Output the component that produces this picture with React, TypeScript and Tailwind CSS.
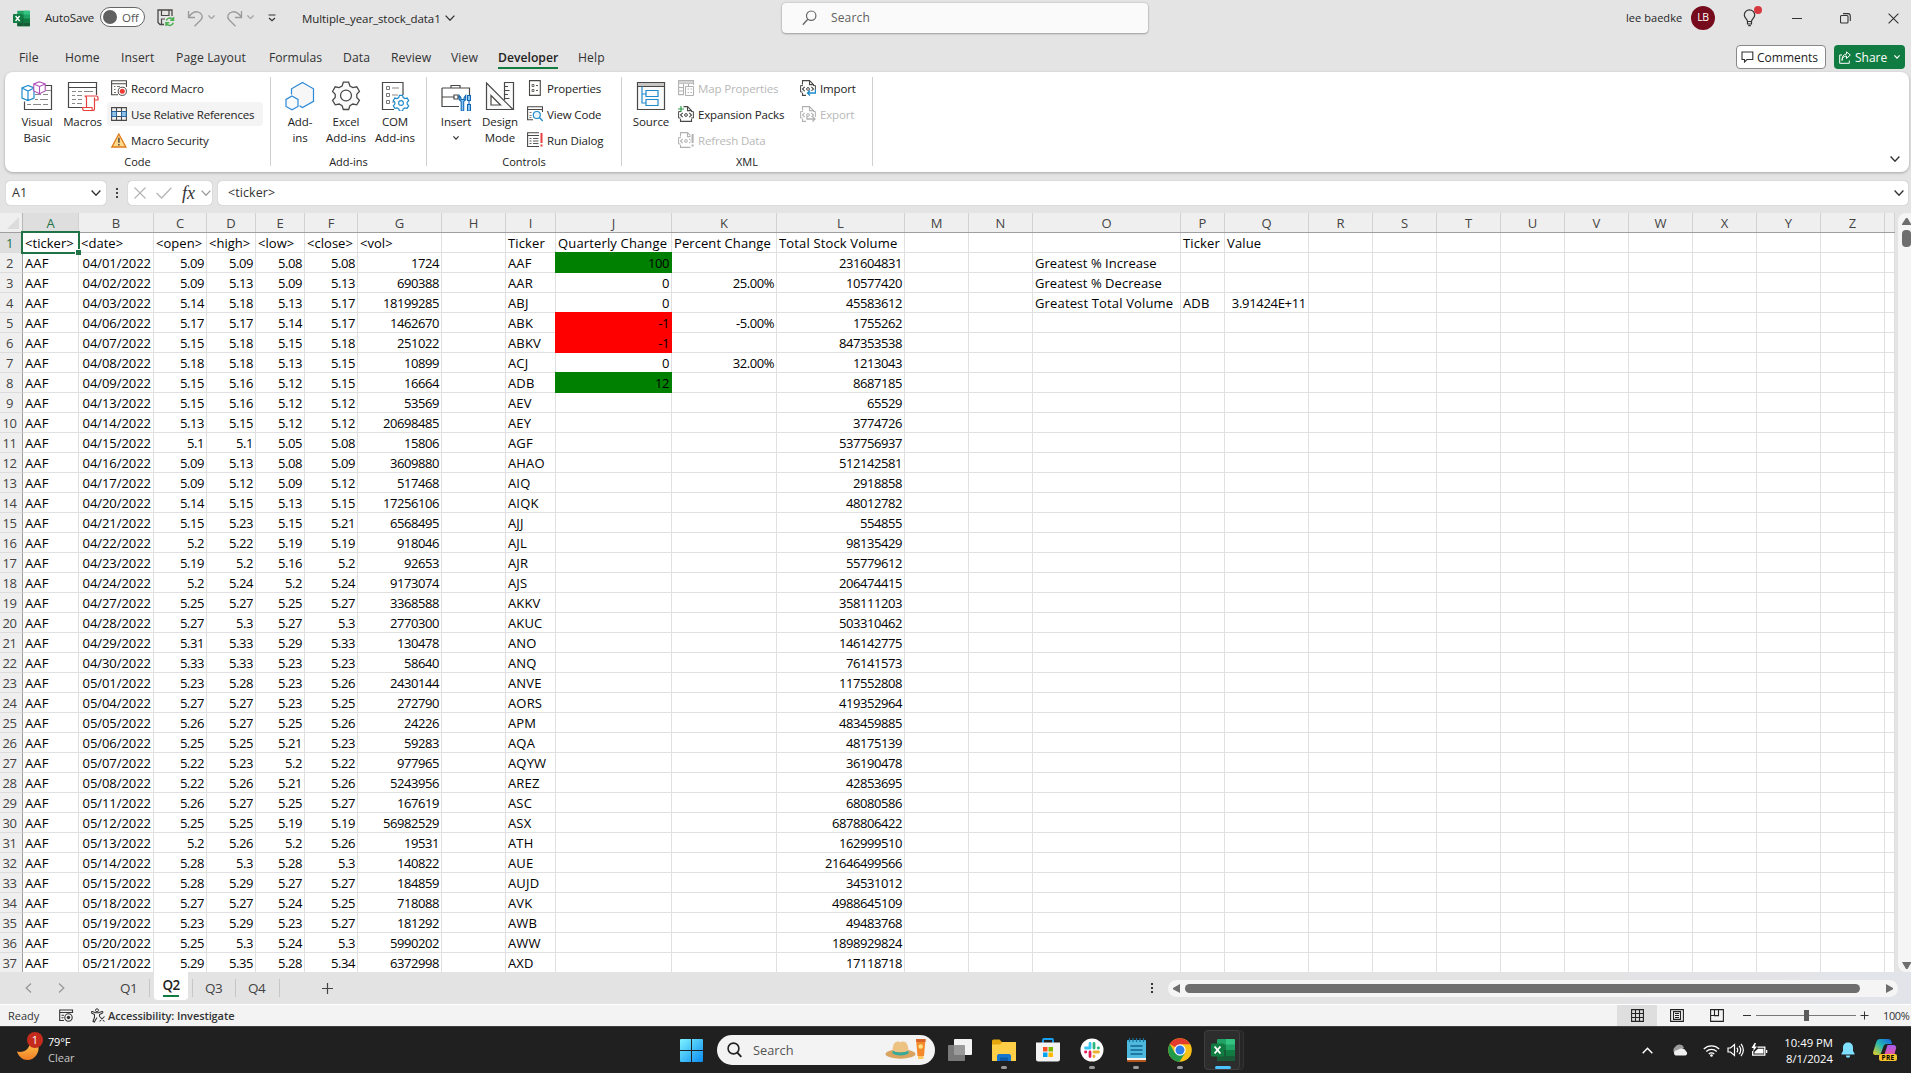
import type { ReactNode } from "react";

const UI = "font-['Open_Sans','Noto_Sans',sans-serif]";

/* ---------- sheet data ---------- */

const COLS: [string, string][] = [
  ["A", "w-[56px]"], ["B", "w-[75px]"], ["C", "w-[53px]"], ["D", "w-[49px]"], ["E", "w-[49px]"],
  ["F", "w-[53px]"], ["G", "w-[84px]"], ["H", "w-[64px]"], ["I", "w-[50px]"], ["J", "w-[116px]"],
  ["K", "w-[105px]"], ["L", "w-[128px]"], ["M", "w-[64px]"], ["N", "w-[64px]"], ["O", "w-[148px]"],
  ["P", "w-[44px]"], ["Q", "w-[84px]"], ["R", "w-[64px]"], ["S", "w-[64px]"], ["T", "w-[64px]"],
  ["U", "w-[64px]"], ["V", "w-[64px]"], ["W", "w-[64px]"], ["X", "w-[64px]"], ["Y", "w-[64px]"],
  ["Z", "w-[64px]"], ["", "w-[10px]"],
];

// date | open | high | low | close | vol | ticker | total volume
const DATA = `04/01/2022|5.09|5.09|5.08|5.08|1724|AAF|231604831
04/02/2022|5.09|5.13|5.09|5.13|690388|AAR|10577420
04/03/2022|5.14|5.18|5.13|5.17|18199285|ABJ|45583612
04/06/2022|5.17|5.17|5.14|5.17|1462670|ABK|1755262
04/07/2022|5.15|5.18|5.15|5.18|251022|ABKV|847353538
04/08/2022|5.18|5.18|5.13|5.15|10899|ACJ|1213043
04/09/2022|5.15|5.16|5.12|5.15|16664|ADB|8687185
04/13/2022|5.15|5.16|5.12|5.12|53569|AEV|65529
04/14/2022|5.13|5.15|5.12|5.12|20698485|AEY|3774726
04/15/2022|5.1|5.1|5.05|5.08|15806|AGF|537756937
04/16/2022|5.09|5.13|5.08|5.09|3609880|AHAO|512142581
04/17/2022|5.09|5.12|5.09|5.12|517468|AIQ|2918858
04/20/2022|5.14|5.15|5.13|5.15|17256106|AIQK|48012782
04/21/2022|5.15|5.23|5.15|5.21|6568495|AJJ|554855
04/22/2022|5.2|5.22|5.19|5.19|918046|AJL|98135429
04/23/2022|5.19|5.2|5.16|5.2|92653|AJR|55779612
04/24/2022|5.2|5.24|5.2|5.24|9173074|AJS|206474415
04/27/2022|5.25|5.27|5.25|5.27|3368588|AKKV|358111203
04/28/2022|5.27|5.3|5.27|5.3|2770300|AKUC|503310462
04/29/2022|5.31|5.33|5.29|5.33|130478|ANO|146142775
04/30/2022|5.33|5.33|5.23|5.23|58640|ANQ|76141573
05/01/2022|5.23|5.28|5.23|5.26|2430144|ANVE|117552808
05/04/2022|5.27|5.27|5.23|5.25|272790|AORS|419352964
05/05/2022|5.26|5.27|5.25|5.26|24226|APM|483459885
05/06/2022|5.25|5.25|5.21|5.23|59283|AQA|48175139
05/07/2022|5.22|5.23|5.2|5.22|977965|AQYW|36190478
05/08/2022|5.22|5.26|5.21|5.26|5243956|AREZ|42853695
05/11/2022|5.26|5.27|5.25|5.27|167619|ASC|68080586
05/12/2022|5.25|5.25|5.19|5.19|56982529|ASX|6878806422
05/13/2022|5.2|5.26|5.2|5.26|19531|ATH|162999510
05/14/2022|5.28|5.3|5.28|5.3|140822|AUE|21646499566
05/15/2022|5.28|5.29|5.27|5.27|184859|AUJD|34531012
05/18/2022|5.27|5.27|5.24|5.25|718088|AVK|4988645109
05/19/2022|5.23|5.29|5.23|5.27|181292|AWB|49483768
05/20/2022|5.25|5.3|5.24|5.3|5990202|AWW|1898929824
05/21/2022|5.29|5.35|5.28|5.34|6372998|AXD|17118718`.split("\n").map((l) => l.split("|"));

const HEAD: Record<string, string> = {
  A: "<ticker>", B: "<date>", C: "<open>", D: "<high>", E: "<low>", F: "<close>", G: "<vol>",
  I: "Ticker", J: "Quarterly Change", K: "Percent Change", L: "Total Stock Volume", P: "Ticker", Q: "Value",
};
const EXTRA: Record<string, string> = {
  J2: "100", J3: "0", J4: "0", J5: "-1", J6: "-1", J7: "0", J8: "12",
  K3: "25.00%", K5: "-5.00%", K7: "32.00%",
  O2: "Greatest % Increase", O3: "Greatest % Decrease", O4: "Greatest Total Volume", P4: "ADB", Q4: "3.91424E+11",
};
const GREEN = "bg-[#008000] border-[#008000] shadow-[-1px_-1px_0_#008000,0_-1px_0_#008000,-1px_0_0_#008000]";
const RED = "bg-[#ff0000] border-[#ff0000] shadow-[-1px_-1px_0_#ff0000,0_-1px_0_#ff0000,-1px_0_0_#ff0000]";
const FILL: Record<string, string> = { J2: GREEN, J8: GREEN, J5: RED, J6: RED };

function valueAt(col: string, row: number): string {
  if (row === 1) return HEAD[col] ?? "";
  const d = DATA[row - 2];
  switch (col) {
    case "A": return "AAF";
    case "B": return d[0];
    case "C": return d[1];
    case "D": return d[2];
    case "E": return d[3];
    case "F": return d[4];
    case "G": return d[5];
    case "I": return d[6];
    case "L": return d[7];
    default: return EXTRA[col + row] ?? "";
  }
}

function tracking(col: string, v: string): string {
  if (v.includes("/")) return "tracking-[-0.05px]";
  if (/^-?\d/.test(v)) return col === "Q" ? "tracking-[-0.3px]" : "tracking-[-0.43px]";
  if (v.includes("%")) return "tracking-[0.05px]";
  if (v === "Percent Change") return "tracking-[0.08px]";
  if (v.startsWith("<")) return "tracking-[0.03px]";
  return "tracking-[0.15px]";
}

function Cell({ col, w, row }: { col: string; w: string; row: number }) {
  const v = valueAt(col, row);
  const align = /^-?\d/.test(v) ? "justify-end pr-[2px]" : "justify-start pl-[2px]";
  const fill = FILL[col + row] ?? "border-[#e0e0e0]";
  return (
    <div className={`${w} flex h-[20px] shrink-0 items-center overflow-visible whitespace-nowrap border-r border-b pt-[2px] text-[13px] leading-[17px] ${align} ${tracking(col, v)} ${fill}`}>
      {v}
    </div>
  );
}

/* ---------- small glyphs ---------- */

function Chevron({ w = 10, c = "#333", sw = 1.3 }: { w?: number; c?: string; sw?: number }) {
  return (
    <svg width={w} height={w * 0.6} viewBox="0 0 10 6" fill="none" stroke={c} strokeWidth={(sw * 10) / w} className="block shrink-0">
      <path d="M.6.6 5 5.2 9.4.6" />
    </svg>
  );
}

function ExcelLogo({ s }: { s: number }) {
  return (
    <svg width={s} height={s} viewBox="0 0 24 24" className="block shrink-0">
      <rect x="6" y="1" width="18" height="22" rx="1.2" fill="#21a366" />
      <path d="M6 6.5h9V12H6z" fill="#107c41" />
      <path d="M15 1h7.800a1.200 1.200 0 0 1 1.200 1.200V6.500h-9z" fill="#33c481" />
      <path d="M15 12h9v5.500h-9z" fill="#107c41" />
      <path d="M6 12h9v11H7.200A1.200 1.200 0 0 1 6 21.800z" fill="#185c37" />
      <path d="M15 17.500h9v4.300a1.200 1.200 0 0 1-1.200 1.200H15z" fill="#185c37" />
      <rect x="0" y="5.500" width="13" height="13" rx="1.200" fill="#107c41" />
      <path d="m3.600 8.500 5.800 7M9.400 8.500l-5.800 7" stroke="#fff" strokeWidth="1.900" />
    </svg>
  );
}

function S({ w, h, children, className = "" }: { w: number; h: number; children: ReactNode; className?: string }) {
  return (
    <svg width={w} height={h} viewBox={`0 0 ${w} ${h}`} fill="none" className={`block shrink-0 ${className}`}>
      {children}
    </svg>
  );
}

const K = "#4a4846";
const B = "#1e8bcd";
const G = "#b1b1b1";
// eight-edge hex gear outline centred on the origin
const GEAR = "M-1.900-9.500h3.800l.9 2.700 2.100 1.200 2.800-.600 1.900 3.200-1.900 2.100v2.300l1.900 2.100-1.900 3.200-2.800-.600-2.100 1.200-.900 2.700h-3.800l-.9-2.700-2.100-1.200-2.800.600-1.900-3.200 1.900-2.100v-2.300l-1.900-2.100 1.900-3.200 2.800.600 2.100-1.200z";

const IcVisualBasic = () => (
  <S w={32} h={30}>
    <path d="M24 4.500h6.500v24H3.500v-8" stroke={K} strokeWidth="1.200" />
    <path d="M25 9.500h5M14 13.500h6M22 13.500h5M14 18.500h3M19 18.500h8M6 23.500h4M12 23.500h8M22 23.500h5" stroke="#8a8886" />
    <path d="M7 4.500 1 7v10l6 2.500 6-2.500V7zM1 7l6 3 6-3M7 10v9.500" fill="#fff" stroke={B} strokeWidth="1.200" />
    <path d="M18.500.8 12.800 3v7l5.700 2.700 5.700-2.700V3zM12.800 3l5.700 2.500L24.200 3M18.500 5.500v7" fill="#fff" stroke="#ae4bb8" strokeWidth="1.100" />
  </S>
);
const IcMacros = () => (
  <S w={32} h={30}>
    <path d="M29.500 14V1.500H1.500v25H16M1.500 6.500h28" stroke={K} strokeWidth="1.200" />
    <path d="M5 10.500h4M11 10.500h4M17 10.500h9M5 14.500h3M10 14.500h5M5 18.500h4M11 18.500h4M5 22.500h3M10 22.500h5" stroke="#8a8886" />
    <path d="M19.500 26.500V17.500c0-1.500-1-2.500-2-2.500h12c1 0 1.500 1 1.500 2.500V19h-3.500v8.500c0 1-.5 2-1.500 2H17c-1 0-1.500-1-1.500-3h9.500c0 2 .5 3 1 3M27.500 19v-2.500" stroke="#e8403c" strokeWidth="1.200" fill="#fff" />
  </S>
);
const IcRecord = () => (
  <S w={16} h={16}>
    <path d="M15.500 7V.7H.6v14H7M.6 3.700h15" stroke={K} strokeWidth="1.100" />
    <path d="M3 6.500h1.500M6 6.500h3M3 9.500h1.500M3 12.500h2" stroke="#797775" />
    <circle cx="11.300" cy="11.300" r="4.100" fill="#fff" stroke={K} /><circle cx="11.300" cy="11.300" r="2.500" fill="#f03a33" />
  </S>
);
const IcRelative = () => (
  <S w={16} h={14}>
    <path d="M.6 4.500h14.800v5H.6z" fill="#8fc3ea" />
    <path d="M5.500 4.500h5v5h-5z" fill="#fff" />
    <path d="M.6.6h14.800v12.800H.6zM.6 4.500h14.800M.6 9.500h14.800M5.500.6v12.800M10.500.6v12.800" stroke={K} strokeWidth="1.100" />
    <path d="M.6 4.500h4.900v5H.6zM10.500 4.500h4.900v5h-4.900z" stroke="#1e6fb8" strokeWidth=".8" />
  </S>
);
const IcWarn = () => (
  <S w={16} h={15}>
    <path d="M7.800 1 .9 14h14z" fill="#fbd88a" stroke="#e07b1a" strokeWidth="1.300" />
    <path d="M7.900 4.800v5M7.900 11v1.500" stroke={K} strokeWidth="1.500" />
  </S>
);
const IcAddins = () => (
  <S w={30} h={30}>
    <path d="m17.500 1.500 11 6.300v12.500l-11 6.300-11-6.300V7.800z" fill="#f7f7f7" stroke="#2b88d8" strokeWidth="1.200" />
    <path d="m7 15 6 3.400v7L7 28.800l-6-3.400v-7z" fill="#fff" stroke="#fff" strokeWidth="3" />
    <path d="m7 15 6 3.400v7L7 28.800l-6-3.400v-7z" fill="#fafafa" stroke="#2b88d8" strokeWidth="1.200" />
  </S>
);
const IcGear = () => (
  <S w={30} h={30}>
    <g transform="translate(15 14.500) scale(1.400)"><path d={GEAR} fill="#fafafa" stroke={K} strokeWidth=".9" /><circle r="3.900" fill="#fff" stroke={K} strokeWidth=".9" /></g>
  </S>
);
const IcCom = () => (
  <S w={30} h={30}>
    <path d="M23 14V1.500H2.500v27H14" stroke={K} strokeWidth="1.200" />
    <path d="M6.500 5.500h3v3h-3zM6.500 12.500h3v3h-3zM6.500 19.500h3v3h-3z" stroke="#797775" />
    <path d="M12 7h7M12 14h6M12 21h2" stroke="#8a8886" />
    <g transform="translate(21 22) scale(.8)"><path d={GEAR} fill="#fff" stroke={B} strokeWidth="1.500" /><circle r="3" stroke={B} strokeWidth="1.400" /></g>
  </S>
);
const IcInsert = () => (
  <S w={30} h={30}>
    <path d="M10 7V4.500h9V7M1 7h27.500v7M1 7v18.500h17M1 16h12M17 16h3" stroke={K} strokeWidth="1.200" />
    <path d="M13 14h4v4h-4z" stroke={K} strokeWidth="1.200" />
    <path d="M18.200 14.500v4l2 2v9.500h2.500v-9.500l2-2v-4l-1.700 2.500v1.500h-3V17z" fill="#8cc6f2" stroke="#1068b5" strokeWidth="1.100" />
    <path d="M26.500 14.500h3v5h-3zM28 19.500v4M26.500 23.500h3V30h-3z" fill="#8cc6f2" stroke="#1068b5" strokeWidth="1.100" />
  </S>
);
const IcDesign = () => (
  <S w={30} h={30}>
    <path d="M19.500 19V1.500h9v27" stroke={K} strokeWidth="1.200" fill="#fafafa" />
    <path d="M19.500 5.500H23M19.500 9.500h5M19.500 13.500H23M19.500 17.500h5" stroke={K} />
    <path d="M1.500 2v26.500H28z" fill="#fafafa" stroke={K} strokeWidth="1.200" />
    <path d="M6 14.500v9.500h9.500z" stroke={K} strokeWidth="1.200" fill="#fff" />
  </S>
);
const IcProps = () => (
  <S w={16} h={16}>
    <path d="M2.500.600h10.800v14.800H2.500z" stroke={K} strokeWidth="1.100" />
    <path d="M5 4.500h2v2H5zM5 9.500h2v2H5z" stroke="#605e5c" strokeWidth=".9" /><path d="M9 5.500h2M9 10.500h2" stroke="#605e5c" />
  </S>
);
const IcView = () => (
  <S w={16} h={16}>
    <path d="M15.500 6V.7H.6v13H6M.6 3.500h15" stroke={K} strokeWidth="1.100" />
    <path d="M2.500 6.500h2M2.500 9.500h2M2.500 11.500h2" stroke="#797775" />
    <circle cx="9.800" cy="9" r="3.500" stroke={B} strokeWidth="1.200" fill="#e9f4fc" /><path d="m12.300 11.500 3.500 3.500" stroke={B} strokeWidth="1.400" />
  </S>
);
const IcRun = () => (
  <S w={16} h={16}>
    <path d="M12 .7H.6v13.800H12M.6 3.500H12" stroke={K} strokeWidth="1.100" />
    <path d="M2.500 6.500h2M6 6.500h5.500M2.500 9h2M6 9h5.500M2.500 11.500h2M6 11.500h5.500" stroke="#605e5c" />
    <path d="M14.500 1v10M14.500 12.500v2" stroke="#e8403c" strokeWidth="2" />
  </S>
);
const IcSource = () => (
  <S w={30} h={30}>
    <path d="M1.500 1.500h27v27h-27z" fill="#fafafa" stroke={K} strokeWidth="1.200" /><path d="M2 2h26v3.500H2z" fill="#c8c6c4" /><path d="M1.500 5.500h27" stroke={K} />
    <path d="M6 5.500V22h4M6 13h4M10 9.500h12v6H10zM10 18.500h12v6H10z" stroke={B} strokeWidth="1.200" />
  </S>
);
const IcMap = () => (
  <S w={16} h={16}>
    <path d="M15.500 5V.6H.6v14H6M.6 3.500h15M.6 7.500H6M.6 11H6M5.500 3.500v11M10.500 3.500V6" stroke={G} strokeWidth="1.100" />
    <path d="M1 1h14v2.500H1z" fill="#d4d4d4" /><path d="M7.500 6.500h8v9h-8z" fill="#fff" stroke={G} /><path d="M9.500 9h1.500M12.500 9H14M9.500 12.500H11M12.500 12.500H14" stroke={G} />
  </S>
);
function Doc({ c, children }: { c: string; children: ReactNode }) {
  return (
    <S w={16} h={16}>
      <path d="M2.500 4.500V.6h7l4 4M9.500.6v4h4.500M2.500 13v2.400h11V13" stroke={c} strokeWidth="1.100" />
      <path d="M.6 12V5.500M15.400 12V5.500M.6 5.600H3M13 5.600h2.400M.6 12h2M13 12h2.400" stroke={c} />
      <path d="M4.700 6.800 2.500 9l2.200 2.200M11.300 6.800 13.500 9l-2.200 2.200" stroke={c} strokeWidth="1.100" />
      <circle cx="8" cy="9" r="1.400" stroke={c} />
      {children}
    </S>
  );
}
const IcExpansion = () => <Doc c={K}><path d="M0 0h5.500v5H0z" fill="#fff" /><path d="M3 0v6M0 3h6" stroke="#2f9e4f" strokeWidth="1.200" /></Doc>;
const IcRefresh = () => <Doc c={G}><path d="M12.500 0H16v16h-3.500z" fill="#fff" /><path d="M14.600 2v9M14.600 12.500v2" stroke={G} strokeWidth="2" /></Doc>;
const IcImport = () => <Doc c={K}><path d="M6 10.800h10V16H6z" fill="#fff" /><path d="M15.500 9.500V13h-8M10 10.500 7.500 13l2.500 2.500" stroke={B} strokeWidth="1.300" /></Doc>;
const IcExport = () => <Doc c={G}><path d="M6 11h10v5H6z" fill="#fff" /><path d="M7 10v3h8M12.500 10.500 15 13l-2.500 2.500" stroke={G} strokeWidth="1.300" /></Doc>;

/* ---------- ribbon ---------- */

function Big({ w, icon, a, b, ml = "" }: { w: string; icon: ReactNode; a: string; b?: ReactNode; ml?: string }) {
  return (
    <div className={`flex ${w} ${ml} shrink-0 flex-col items-center whitespace-nowrap`}>
      <div className="mt-[3px] flex h-[34px] items-center">{icon}</div>
      <span className="mt-[1px] h-[16px] text-[11.500px] leading-[16px] tracking-[-0.1px]">{a}</span>
      {b && <span className="flex h-[16px] items-center text-[11.500px] leading-[16px] tracking-[-0.1px]">{b}</span>}
    </div>
  );
}
function Small({ icon, t, on, off, w = "w-[156px]" }: { icon: ReactNode; t: string; on?: boolean; off?: boolean; w?: string }) {
  return (
    <div className={`mb-[2px] flex h-[24px] items-center rounded-[4px] pl-[4px] ${w} ${on ? "bg-[#f4f4f4]" : ""}`}>
      <span className="flex h-[16px] w-[16px] items-center">{icon}</span>
      <span className={`ml-[4px] mt-[1px] whitespace-nowrap text-[11.500px] ${on ? "tracking-[-0.2px]" : "tracking-[-0.15px]"} ${off ? "text-[#b8b8b8]" : ""}`}>{t}</span>
    </div>
  );
}
function Group({ w, label, children }: { w: string; label: string; children: ReactNode }) {
  return (
    <div className={`flex ${w} shrink-0 flex-col`}>
      <div className="mt-[4px] flex h-[78px]">{children}</div>
      <div className="text-center text-[11px] leading-[16px]">{label}</div>
    </div>
  );
}
const Sep = () => <div className="mt-[5px] h-[89px] w-px shrink-0 bg-[#d0d0d0]" />;

const TABS: [string, string][] = [
  ["File", "ml-[19px] w-[46px]"], ["Home", "w-[56px]"], ["Insert", "w-[55px]"], ["Page Layout", "w-[93px]"],
  ["Formulas", "w-[74px]"], ["Data", "w-[48px]"], ["Review", "w-[60px]"], ["View", "w-[47px]"], ["Developer", "w-[80px]"], ["Help", "w-[40px]"],
];

function TitleBar() {
  return (
    <div className="flex h-[36px] items-center whitespace-nowrap text-[11.500px] text-[#262626]">
      <div className="ml-[13px] w-[32px]"><ExcelLogo s={17} /></div>
      <div className="w-[55px] tracking-[-0.15px]">AutoSave</div>
      <div className="mt-[-2px] flex h-[20px] w-[45px] items-center rounded-full border border-[#666] bg-white pl-[2px]">
        <div className="h-[14px] w-[14px] rounded-full bg-[#616161]" />
        <div className="ml-[5px] mt-[1px] text-[11.500px] leading-[16px] text-[#555]">Off</div>
      </div>
      <S w={18} h={18} className="ml-[12px]">
        <path d="M7 15.500H3L1 13.500V1h14v6" stroke={K} strokeWidth="1.300" />
        <path d="M4.500 1v5.500h7.500V1M4.500 15.500V10H8" stroke={K} strokeWidth="1.200" />
        <path d="M16.500 8v3.300h-3.300M9 17v-3.300h3.300M9.300 11.600a3.800 3.800 0 0 1 7-.600M16.300 13.800a3.800 3.800 0 0 1-7 .600" stroke="#4caf50" strokeWidth="1.500" />
      </S>
      <S w={17} h={17} className="ml-[12px]">
        <path d="M1.500 1v6.500H8M1.500 7.200C4 3.500 7 1.500 10.500 1.800c4.500.700 6 5 3.500 8L7.500 16.300" stroke="#9a9a9a" strokeWidth="1.300" />
      </S>
      <div className="ml-[4px] mt-[-2px] w-[18px]"><Chevron w={7} c="#a5a5a5" /></div>
      <S w={17} h={17}>
        <path d="M15.500 1v6.500H9M15.500 7.200C13 3.500 10 1.500 6.500 1.800c-4.500.700-6 5-3.500 8l6.500 6.500" stroke="#9a9a9a" strokeWidth="1.300" />
      </S>
      <div className="ml-[4px] mt-[-2px] w-[21px]"><Chevron w={7} c="#a5a5a5" /></div>
      <S w={8} h={8}><path d="M.5 1h7M1 4l3 2.800L7 4" stroke="#333" strokeWidth="1.200" /></S>
      <div className="ml-[26px] mt-[1px] w-[143px] tracking-[-0.08px]">Multiple_year_stock_data1</div>
      <Chevron w={10} />
      <div className="ml-[327px] mt-[-1px] flex h-[30px] w-[366px] items-center rounded-[4px] bg-[#fafafa] shadow-[0_0_2px_rgba(0,0,0,0.25),0_1px_2px_rgba(0,0,0,0.25)]">
        <S w={15} h={16} className="ml-[20px]"><circle cx="9.200" cy="5.700" r="4.700" stroke="#666" strokeWidth="1.200" /><path d="M5.800 9.200.8 14.700" stroke="#666" strokeWidth="1.300" /></S>
        <div className="ml-[14px] mt-[1px] text-[12px] tracking-[0.15px] text-[#616161]">Search</div>
      </div>
      <div className="flex-1" />
      <div className="w-[65px] text-[11px] tracking-[0.05px]">lee baedke</div>
      <div className="flex h-[24px] w-[24px] items-center justify-center rounded-full bg-[#750b1c] text-[10.500px] tracking-[-0.3px] text-white">LB</div>
      <div className="relative ml-[28px] w-[49px]">
        <S w={14} h={18}><path d="M4.500 12.500C4.500 10 1.300 9 1.300 6a5.200 5.200 0 0 1 10.400 0c0 3-3.200 4-3.200 6.500zM4.500 12.500v2.500h4v-2.500M5.200 16.700h2.600" stroke="#333" strokeWidth="1.200" /></S>
        <div className="absolute left-[11px] top-[-3px] h-[8px] w-[8px] rounded-full bg-[#d8383f]" />
      </div>
      <div className="h-px w-[10px] bg-[#333]" />
      <S w={11} h={11} className="ml-[38px]"><path d="M.5 3.500a1 1 0 0 1 1-1h5.500a1 1 0 0 1 1 1V9a1 1 0 0 1-1 1H1.500a1 1 0 0 1-1-1zM3 .6h5A2.500 2.500 0 0 1 10.300 3v5" stroke="#333" strokeWidth="1.100" /></S>
      <S w={11} h={11} className="ml-[37px] mr-[12px]"><path d="m.6.600 9.800 9.800M10.400.600.6 10.400" stroke="#333" strokeWidth="1.100" /></S>
    </div>
  );
}

function TabRow() {
  return (
    <div className="flex h-[36px] whitespace-nowrap text-[12.200px] text-[#333]">
      {TABS.map(([t, w]) => (
        <div key={t} className={`${w} flex shrink-0 pt-[13px]`}>
          <span className={`h-[20px] leading-[18px] ${t === "Developer" ? "border-b-2 border-[#107c41] font-semibold text-[#222]" : t === "Formulas" ? "" : "tracking-[0.08px]"}`}>{t}</span>
        </div>
      ))}
      <div className="flex-1" />
      <div className="mr-[8px] mt-[9px] flex h-[24px] w-[90px] items-center rounded-[4px] border border-[#888] bg-white pl-[4px] text-[12px] text-[#222]">
        <S w={13} h={12}><path d="M1 1h10.800v7.500H6L3.500 11V8.500H1z" stroke="#333" strokeWidth="1.100" /></S>
        <span className="ml-[3px] mt-[1px]">Comments</span>
      </div>
      <div className="mr-[6px] mt-[9px] flex h-[24px] w-[71px] items-center rounded-[4px] bg-[#107c41] pl-[5px] text-[12px] text-white">
        <S w={12} h={13}><path d="M3 4H.7v8.300h9.600V9.500M3 9.500c.3-3 2-4.500 4.500-4.500V7.500L11.300 4 7.500.900V3C4.500 3.300 3 5.500 3 9.500z" stroke="#fff" /></S>
        <span className="ml-[4px] mr-[7px] mt-[1px]">Share</span>
        <Chevron w={6} c="#fff" sw={1.200} />
      </div>
    </div>
  );
}

function Ribbon() {
  return (
    <div className="ml-[5px] mr-[2px] flex h-[100px] shrink-0 rounded-[8px] bg-white text-[#222] shadow-[0_1px_3px_rgba(0,0,0,0.28)]">
      <Group w="w-[265px]" label="Code">
        <Big ml="ml-[6px]" w="w-[52px]" icon={<IcVisualBasic />} a="Visual" b="Basic" />
        <Big w="w-[39px]" icon={<IcMacros />} a="Macros" />
        <div className="ml-[5px]">
          <Small icon={<IcRecord />} t="Record Macro" />
          <Small icon={<IcRelative />} t="Use Relative References" on />
          <Small icon={<IcWarn />} t="Macro Security" />
        </div>
      </Group>
      <Sep />
      <Group w="w-[155px]" label="Add-ins">
        <Big ml="ml-[9px]" w="w-[40px]" icon={<IcAddins />} a="Add-" b="ins" />
        <Big ml="ml-[4px]" w="w-[44px]" icon={<IcGear />} a="Excel" b="Add-ins" />
        <Big ml="ml-[5px]" w="w-[44px]" icon={<IcCom />} a="COM" b="Add-ins" />
      </Group>
      <Sep />
      <Group w="w-[194px]" label="Controls">
        <Big ml="ml-[8px]" w="w-[42px]" icon={<IcInsert />} a="Insert" b={<Chevron w={6} sw={1.200} />} />
        <Big ml="ml-[3px]" w="w-[40px]" icon={<IcDesign />} a="Design" b="Mode" />
        <div className="ml-[3px]">
          <Small w="w-[92px]" icon={<IcProps />} t="Properties" />
          <Small w="w-[92px]" icon={<IcView />} t="View Code" />
          <Small w="w-[92px]" icon={<IcRun />} t="Run Dialog" />
        </div>
      </Group>
      <Sep />
      <Group w="w-[250px]" label="XML">
        <Big ml="ml-[8px]" w="w-[42px]" icon={<IcSource />} a="Source" />
        <div className="ml-[2px]">
          <Small w="w-[122px]" icon={<IcMap />} t="Map Properties" off />
          <Small w="w-[122px]" icon={<IcExpansion />} t="Expansion Packs" />
          <Small w="w-[122px]" icon={<IcRefresh />} t="Refresh Data" off />
        </div>
        <div>
          <Small w="w-[70px]" icon={<IcImport />} t="Import" />
          <Small w="w-[70px]" icon={<IcExport />} t="Export" off />
        </div>
      </Group>
      <Sep />
      <div className="flex flex-1 items-end justify-end pb-[10px] pr-[9px]"><Chevron w={10} sw={1.400} /></div>
    </div>
  );
}

function FormulaBar() {
  return (
    <div className="mt-[9px] flex h-[24px] shrink-0 items-center text-[12.500px] text-[#333]">
      <div className="ml-[6px] flex h-[24px] w-[100px] items-center justify-between rounded-[4px] bg-white pl-[6px] pr-[5px] shadow-[0_0_1px_rgba(0,0,0,0.4)]">
        <span className="mt-[1px]">A1</span><Chevron w={10} sw={1.400} />
      </div>
      <div className="ml-[10px] flex w-[2px] flex-col gap-[2px]">
        <i className="h-[2px] w-[2px] bg-[#444]" /><i className="h-[2px] w-[2px] bg-[#444]" /><i className="h-[2px] w-[2px] bg-[#444]" />
      </div>
      <div className="ml-[10px] flex h-[24px] w-[84px] items-center rounded-[4px] bg-white shadow-[0_0_1px_rgba(0,0,0,0.4)]">
        <S w={12} h={12} className="ml-[6px]"><path d="m.5.500 11 11M11.500.500l-11 11" stroke="#b5b5b5" strokeWidth="1.200" /></S>
        <S w={16} h={12} className="ml-[10px]"><path d="m.6 6 5 5L15.400.800" stroke="#b5b5b5" strokeWidth="1.300" /></S>
        <span className="ml-[10px] w-[19px] font-['Liberation_Serif',serif] text-[18px] italic leading-[20px] text-[#333]">fx</span>
        <Chevron w={10} c="#999" />
      </div>
      <div className="ml-[6px] mr-[3px] flex h-[24px] flex-1 items-center justify-between rounded-[4px] bg-white pl-[10px] pr-[4px] shadow-[0_0_1px_rgba(0,0,0,0.4)]">
        <span className="mt-[1px] tracking-[0.08px]">&lt;ticker&gt;</span><Chevron w={10} sw={1.400} />
      </div>
    </div>
  );
}

function Sheet() {
  return (
    <div className="mt-[8px] flex h-[759px] shrink-0 overflow-hidden">
      <div className="relative w-[1895px] shrink-0 overflow-hidden bg-white text-black">
        <div className="flex h-[20px] border-b border-[#9f9f9f] bg-[#efefef] text-[13px] text-[#444]">
          <div className="flex w-[23px] shrink-0 items-end justify-end border-r border-[#b5b5b5] pb-[3px] pr-[3px]">
            <S w={12} h={12}><path d="M12 0v12H0z" fill="#dcdcdc" /></S>
          </div>
          {COLS.map(([c, w], i) => (
            <div key={i} className={`${w} flex h-[19px] shrink-0 items-center justify-center border-r border-[#d2d2d2] pt-[2px] leading-[17px] ${c === "A" ? "bg-[#dedede] text-[#217346]" : ""}`}>{c}</div>
          ))}
        </div>
        {Array.from({ length: 37 }, (_, r) => (
          <div key={r} className="flex">
            <div className={`flex h-[20px] w-[23px] shrink-0 items-center justify-center border-r border-b border-r-[#9f9f9f] border-b-[#dcdcdc] pr-[3px] pt-[2px] text-[13px] leading-[17px] tracking-[-0.43px] ${r === 0 ? "bg-[#dedede] text-[#217346]" : "bg-[#efefef] text-[#444]"}`}>{r + 1}</div>
            {COLS.map(([c, w], i) => <Cell key={i} col={c} w={w} row={r + 1} />)}
          </div>
        ))}
        <div className="absolute left-[21px] top-[18px] h-[23px] w-[59px] border-2 border-[#217346]" />
        <div className="absolute left-[75px] top-[36px] h-[6px] w-[6px] border-l border-t border-white bg-[#217346]" />
      </div>
      <div className="ml-[3px] flex flex-1 flex-col items-end rounded-tl-[8px] rounded-bl-[8px] bg-[#f5f5f5] pt-[5px]">
        <S w={9} h={7}><path d="M0 7V6l4-6h1.500L9 6v1z" fill="#6e6e6e" /></S>
        <div className="mt-[5px] h-[17px] w-[9px] rounded-[4px] bg-[#6e6e6e]" />
        <div className="flex-1" />
        <S w={9} h={7} className="mb-[3px]"><path d="M0 0h9v1L5.500 7H4z" fill="#6e6e6e" /></S>
      </div>
    </div>
  );
}

function SheetTabs() {
  const sep = "h-[18px] w-px shrink-0 bg-[#c6c6c6]";
  return (
    <div className="flex h-[32px] shrink-0 items-center bg-linear-to-r from-[#e3e3e3] from-80% to-[#e3e4ea] text-[13.500px] text-[#444]">
      <S w={7} h={10} className="ml-[25px]"><path d="M6 .6 1.200 5 6 9.400" stroke="#999" strokeWidth="1.300" /></S>
      <S w={7} h={10} className="ml-[26px]"><path d="M1 .6 5.800 5 1 9.400" stroke="#999" strokeWidth="1.300" /></S>
      <div className="ml-[55px] w-[29px] tracking-[-0.5px]">Q1</div>
      <div className={sep} />
      <div className="ml-[4px] flex h-[28px] w-[34px] flex-col items-center self-start rounded-b-[4px] bg-white">
        <span className="mt-[3px] h-[22px] border-b-2 border-[#107c41] font-semibold leading-[20px] tracking-[-0.7px] text-[#222]">Q2</span>
      </div>
      <div className={`ml-[4px] ${sep}`} />
      <div className="ml-[12px] w-[30px] tracking-[-0.5px]">Q3</div>
      <div className={sep} />
      <div className="ml-[12px] w-[31px] tracking-[-0.5px]">Q4</div>
      <div className={sep} />
      <S w={11} h={11} className="ml-[42px]"><path d="M5.500 0v11M0 5.500h11" stroke="#444" strokeWidth="1.200" /></S>
      <div className="flex-1" />
      <div className="flex w-[2px] flex-col gap-[2px]">
        <i className="h-[2px] w-[2px] bg-[#333]" /><i className="h-[2px] w-[2px] bg-[#333]" /><i className="h-[2px] w-[2px] bg-[#333]" />
      </div>
      <div className="ml-[15px] mr-[13px] flex h-[17px] w-[730px] items-center rounded-full bg-[#f5f5f5] pl-[5px] pr-[5px]">
        <S w={7} h={9}><path d="M7 0v9L0 5.200V4z" fill="#6e6e6e" /></S>
        <div className="ml-[5px] h-[9px] w-[675px] rounded-full bg-[#6e6e6e]" />
        <div className="flex-1" />
        <S w={7} h={9}><path d="M0 0v9l7-3.800V4z" fill="#6e6e6e" /></S>
      </div>
    </div>
  );
}

function StatusBar() {
  return (
    <div className="flex h-[22px] shrink-0 items-center whitespace-nowrap border-t border-white bg-[#f3f3f3] text-[11px] text-[#333]">
      <div className="ml-[8px] mt-[1px] w-[51px]">Ready</div>
      <S w={15} h={13} className="mr-[17px]"><path d="M13.500 4V1H.7v10.500H5M.7 3.500h13M2.500 6.200h2.500M2.500 8.700h2" stroke="#333" strokeWidth="1.100" /><circle cx="9.500" cy="8.500" r="3.700" stroke="#333" strokeWidth="1.100" /><circle cx="9.500" cy="8.500" r="1.700" fill="#333" /></S>
      <S w={15} h={15}><circle cx="6" cy="2.300" r="1.500" stroke="#333" /><path d="M8.500 8.500V6.500L11.500 5c.8-.600.300-1.700-.6-1.400L7.500 4.800h-3L1.300 3.600C.3 3.300-.1 4.400.7 5l2.800 1.500v2.800L2 13.500l1.300.500L6 9.500M8.500 8.500l5 5M13.500 8.500l-5 5" stroke="#333" strokeWidth="1.050" /></S>
      <div className="ml-[2px] mt-[1px] font-semibold tracking-[-0.1px]">Accessibility: Investigate</div>
      <div className="flex-1" />
      <div className="flex h-[21px] w-[40px] items-center justify-center bg-[#dedede]">
        <S w={13} h={13}><path d="M.6.600h11.800v11.800H.6zM.6 4.500h11.800M.6 8.500h11.800M4.500.600v11.800M8.500.600v11.800" stroke="#222" strokeWidth="1.100" /></S>
      </div>
      <S w={14} h={13} className="ml-[13px]"><path d="M.6.600h12.800v11.800H.6zM3.500 2.600h7v7.800h-7zM5 4.500h4M5 6.500h4M5 8.500h4" stroke="#222" strokeWidth="1.100" /></S>
      <S w={14} h={13} className="ml-[26px]"><path d="M.6.600h12.800v11.800H.6zM4.500.600v6h4v-6M.6 6.500h4M8.500 6.500" stroke="#222" strokeWidth="1.100" /></S>
      <div className="ml-[19px] h-px w-[8px] bg-[#333]" />
      <div className="relative ml-[5px] h-px w-[100px] bg-[#777]"><div className="absolute left-[48px] top-[-5px] h-[11px] w-[5px] bg-[#5c5c5c]" /></div>
      <S w={9} h={9} className="ml-[4px]"><path d="M4.500.500v8M.5 4.500h8" stroke="#333" /></S>
      <div className="ml-[14px] mt-[1px] w-[28px] tracking-[-0.4px]">100%</div>
    </div>
  );
}

function TaskIcon({ ml, children, dot, active }: { ml: string; children: ReactNode; dot?: boolean; active?: boolean }) {
  return (
    <div className={`${ml} relative flex h-[40px] w-[24px] shrink-0 items-center justify-center`}>
      {children}
      {dot && <div className="absolute bottom-[1px] left-[9px] h-[3px] w-[6px] rounded-full bg-[#9a9a9a]" />}
      {active && <div className="absolute bottom-[1px] left-[4px] h-[3px] w-[16px] rounded-full bg-[#4cc2ff]" />}
    </div>
  );
}

function Taskbar() {
  return (
    <div className="flex h-[47px] shrink-0 items-center border-t border-[#3d3d3d] bg-[#202020] text-white">
      <div className="relative ml-[17px] h-[28px] w-[31px]">
        <S w={24} h={26}>
          <defs><linearGradient id="moon" x1="0" y1="0" x2="0" y2="1"><stop offset="0" stopColor="#ffc04a" /><stop offset="1" stopColor="#ef7c24" /></linearGradient></defs>
          <path d="M0 15.500c5 1.500 11-1 12.500-6.500L21 8c2.500 8-3 16-10.500 16C5.500 24 2 21 0 15.500z" fill="url(#moon)" />
        </S>
        <div className="absolute left-[10px] top-[-4px] flex h-[16px] w-[16px] items-center justify-center rounded-full bg-[#c42b1c] text-[11px]">1</div>
      </div>
      <div className="w-[632px] text-[11px] leading-[16px]"><div className="tracking-[-0.2px]">79°F</div><div className="text-[#c8c8c8]">Clear</div></div>
      <S w={23} h={23}>
        <defs><linearGradient id="win" x1="0" y1="0" x2="1" y2="1"><stop offset="0" stopColor="#7df3ff" /><stop offset="1" stopColor="#0a8cf0" /></linearGradient></defs>
        <path d="M1 0h10v11H0V1a1 1 0 0 1 1-1zM12 0h10a1 1 0 0 1 1 1v10H12zM0 12h11v11H1a1 1 0 0 1-1-1zM12 12h11v10a1 1 0 0 1-1 1H12z" fill="url(#win)" />
      </S>
      <div className="ml-[14px] flex h-[30px] w-[218px] items-center rounded-full bg-[#f3f3f3]">
        <S w={15} h={16} className="ml-[10px]"><circle cx="6.500" cy="6.500" r="5.400" stroke="#222" strokeWidth="1.600" /><path d="m10.300 10.600 4 4.200" stroke="#222" strokeWidth="1.900" /></S>
        <span className="ml-[11px] mt-[1px] w-[132px] text-[12.800px] text-[#555]">Search</span>
        <S w={42} h={24}>
          <ellipse cx="15.500" cy="16" rx="15" ry="4.700" fill="#d9a45f" />
          <path d="M7.500 14c0-7 2-10.500 5-10.500 1.500 0 2 .700 3 .700s1.500-.700 3-.700c3 0 5 3.500 5 10.500z" fill="#edc384" />
          <path d="M7.500 12.500c4 2.500 12 2.500 16 0v3c-4 2.500-12 2.500-16 0z" fill="#35a99a" />
          <path d="M31 1h9.500l-1.500 17h-6.500z" fill="#f58a2c" /><path d="M31 1h9.500v3H31.300z" fill="#d9652b" /><circle cx="35.700" cy="8.500" r="2.300" fill="#ffe083" /><path d="M33 18h5.500v3H33z" fill="#ffc861" />
        </S>
      </div>
      <TaskIcon ml="ml-[13px]"><S w={24} h={22}><rect x="6" width="18" height="16" rx="1" fill="#f3f3f3" /><rect y="6" width="17" height="16" rx="1" fill="#8a8a8a" fillOpacity=".85" /></S></TaskIcon>
      <TaskIcon ml="ml-[20px]" dot>
        <S w={24} h={22}><path d="M0 2a1.500 1.500 0 0 1 1.500-1.500h6L10 3h12.500A1.500 1.500 0 0 1 24 4.500V12H0z" fill="#e5a50d" /><path d="M0 5.500h8L10.500 3H24v19H0z" fill="#ffcf48" /><path d="M5 22v-5a2 2 0 0 1 2-2h10a2 2 0 0 1 2 2v5z" fill="#1377cf" /><path d="M8 18.500h8V22H8z" fill="#0b5aa8" /></S>
      </TaskIcon>
      <TaskIcon ml="ml-[20px]">
        <S w={24} h={24}><path d="M7 6V2a1 1 0 0 1 1-1h8a1 1 0 0 1 1 1v4" stroke="#1aa0f0" strokeWidth="1.800" /><path d="M0 4.500h24V21a2.500 2.500 0 0 1-2.500 2.500h-19A2.500 2.500 0 0 1 0 21z" fill="#f3f3f3" /><path d="M7 9h4.500v4.500H7z" fill="#f25022" /><path d="M12.500 9H17v4.500h-4.500z" fill="#7fba00" /><path d="M7 14.500h4.500V19H7z" fill="#00a4ef" /><path d="M12.500 14.500H17V19h-4.500z" fill="#ffb900" /></S>
      </TaskIcon>
      <TaskIcon ml="ml-[20px]" dot>
        <S w={24} h={24}><circle cx="12" cy="12" r="11.500" fill="#fff" />
          <g strokeWidth="2.800" strokeLinecap="round"><path d="M10 5.500V10M5.500 10H10" stroke="#36c5f0" /><path d="M14 5.500V10M18.500 10h-.3" stroke="#2eb67d" /><path d="M14 14h4.500M14 18.500v-.3" stroke="#ecb22e" /><path d="M10 14v4.500M5.500 14h.3" stroke="#e01e5a" /></g></S>
      </TaskIcon>
      <TaskIcon ml="ml-[20px]" dot>
        <S w={19} h={24}><rect y="2" width="19" height="20" rx="1" fill="#4fb9dd" /><path d="M0 20.500h19V23a1 1 0 0 1-1 1H1a1 1 0 0 1-1-1z" fill="#b5551c" /><path d="M0 20h19v2H0z" fill="#f2f2f2" /><path d="M3.500 8h12M3.500 12h12M3.500 16h12" stroke="#11648c" strokeWidth="1.600" /><path d="M2.500 0v4M6 0v4M9.500 0v4M13 0v4M16.500 0v4" stroke="#17739c" strokeWidth="1.200" /></S>
      </TaskIcon>
      <TaskIcon ml="ml-[20px]" dot>
        <S w={24} h={24}><circle cx="12" cy="12" r="11.800" fill="#fbc116" /><path d="M12 12 1.800 6.100A11.800 11.800 0 0 1 22.200 6.200H12z" fill="#e33b2e" /><path d="M1.800 6.100A11.800 11.800 0 0 0 11.500 23.800L17 14.900 7 14.900z" fill="#229a4b" /><circle cx="12" cy="12" r="5.700" fill="#fff" /><circle cx="12" cy="12" r="4.500" fill="#2f7de9" /></S>
      </TaskIcon>
      <div className="ml-[12px] h-[40px] w-[40px] rounded-[4px] border border-[#333] bg-[#262626]">
        <div className="mt-[-1px] ml-[-1px] flex h-[40px] w-[36px] justify-center rounded-[4px] border border-[#3f3f3f] bg-[#2d2d2d]">
          <TaskIcon ml="ml-[2px] mt-[-1px]" active><ExcelLogo s={24} /></TaskIcon>
        </div>
      </div>
      <div className="flex-1" />
      <S w={11} h={7}><path d="M.7 6.300 5.500 1.300l4.800 5" stroke="#fff" strokeWidth="1.500" /></S>
      <S w={17} h={12} className="ml-[18px]"><path d="M4 9.500A4 4 0 0 1 4 3a5 5 0 0 1 9 .5z" fill="#9c9c9c" /><path d="M4.500 11.500a2.800 2.800 0 0 1 0-5c2 0 4-2.500 7-2 2.500.300 3 2 3.500 2.800a2.300 2.300 0 0 1-.5 4.200z" fill="#efefef" /></S>
      <S w={17} h={13} className="ml-[15px]"><path d="M.8 5a10.900 10.900 0 0 1 15.400 0M3.300 7.500a7.300 7.300 0 0 1 10.400 0M5.800 10a3.800 3.800 0 0 1 5.400 0" stroke="#fff" strokeWidth="1.300" /><circle cx="8.500" cy="11.500" r="1.300" fill="#fff" /></S>
      <S w={17} h={14} className="ml-[7px]"><path d="M1 5v4h2.500L7.500 12.500v-11L3.500 5z" stroke="#fff" strokeWidth="1.200" /><path d="M9.800 4.800a3 3 0 0 1 0 4.400M12 2.800a6 6 0 0 1 0 8.400M14 1a8.800 8.800 0 0 1 0 12" stroke="#fff" strokeWidth="1.200" /></S>
      <S w={17} h={15} className="ml-[7px]"><path d="M6.500 4.200h7.300v8H1.700V8" stroke="#fff" strokeWidth="1.300" /><path d="M7 5.800h5.500v4.800H3.500V9z" fill="#fff" /><path d="M15 7h1.300v3H15z" fill="#fff" /><path d="M3.500 0 .5 5h2.200L2 8.500 6 3.500H3.700L5 0z" fill="#fff" /></S>
      <div className="ml-[14px] mt-[1px] w-[51px] whitespace-nowrap text-right text-[11.300px] leading-[16px]"><div>10:49 PM</div><div>8/1/2024</div></div>
      <S w={14} h={16} className="ml-[8px]"><path d="M7 .500c3 0 5 2 5 5V9l1.500 2.500v1H.5v-1L2 9V5.500c0-3 2-5 5-5z" fill="#7fe0ff" /><path d="M4.800 13.500h4.400a2.200 2.200 0 0 1-4.400 0z" fill="#7fe0ff" /></S>
      <div className="relative ml-[18px] mr-[14px] h-[22px] w-[24px]">
        <S w={24} h={22}>
          <defs><linearGradient id="cpa" x1="1" y1="0" x2="0" y2="1"><stop offset="0" stopColor="#1560e8" /><stop offset=".5" stopColor="#25b7b0" /><stop offset="1" stopColor="#f5d21a" /></linearGradient><linearGradient id="cpb" x1="0" y1="0" x2="0" y2="1"><stop offset="0" stopColor="#a45cf2" /><stop offset="1" stopColor="#f2569c" /></linearGradient></defs>
          <path d="M7 0h8c2 0 3 1 3.500 3l.5 2h-5c-2 0-3 1-3.500 2.500L8 14c-.5 1.500-1 2-3 2H2.500C.5 16-.3 14.500.3 12.500l3-9.500C4 1 5 0 7 0z" fill="url(#cpa)" />
          <path d="M14.500 6H20c2.500 0 3.500 1.500 3 3.500L21.500 15c-.5 1.500-1.500 2-3 2H11z" fill="url(#cpb)" />
        </S>
        <div className="absolute left-[6px] top-[15px] flex h-[7px] w-[18px] items-center justify-center rounded-[2px] bg-[#f9c32b] text-[6.500px] font-bold leading-[7px] tracking-[0.3px] text-black">PRE</div>
      </div>
    </div>
  );
}

export default function App() {
  return (
    <div className={`${UI} flex h-[1073px] w-[1911px] flex-col overflow-hidden bg-[#e4e4e4]`}>
      <TitleBar />
      <TabRow />
      <Ribbon />
      <FormulaBar />
      <Sheet />
      <SheetTabs />
      <StatusBar />
      <Taskbar />
    </div>
  );
}
